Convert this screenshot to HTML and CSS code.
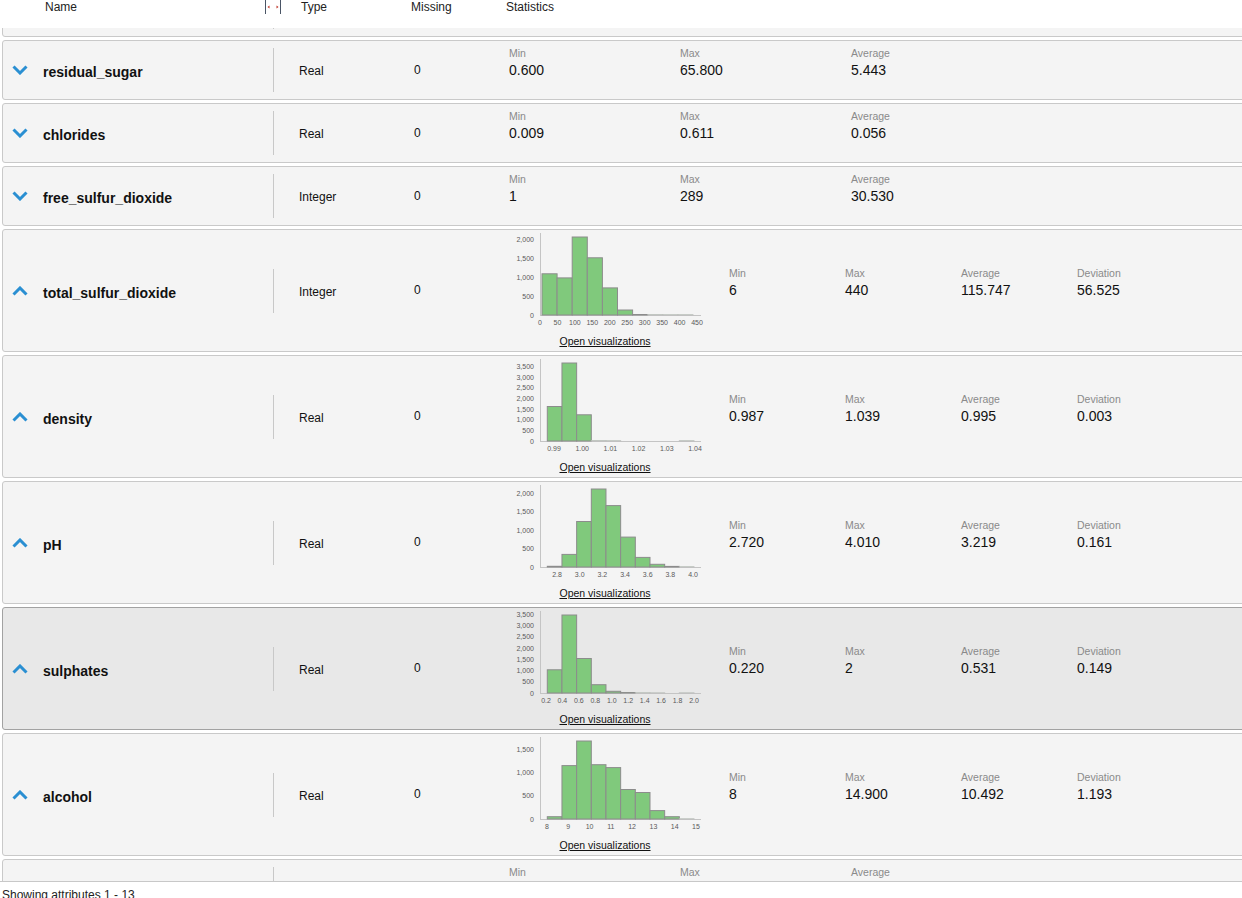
FILE: index.html
```html
<!DOCTYPE html>
<html>
<head>
<meta charset="utf-8">
<title>Attributes</title>
<link rel="stylesheet" href="styles.css">
</head>
<body>
<div class="header">
  <div class="h-name">Name</div>
  <div class="h-split">
    <svg width="17" height="15" viewBox="0 0 17 15">
      <line x1="0.5" y1="0" x2="0.5" y2="14" stroke="#4a5566" stroke-width="1"/>
      <line x1="15.5" y1="0" x2="15.5" y2="14" stroke="#4a5566" stroke-width="1"/>
      <path d="M4.5 5.5 L2.5 7 L4.5 8.5 Z" fill="#c0392b"/>
      <path d="M11.5 5.5 L13.5 7 L11.5 8.5 Z" fill="#c0392b"/>
    </svg>
  </div>
  <div class="h-type">Type</div>
  <div class="h-missing">Missing</div>
  <div class="h-stats">Statistics</div>
</div>

<div class="viewport">
  <div class="list">

    <div class="row">
      <div class="chev"></div>
      <div class="name"></div>
      <div class="sep"></div>
    </div>

    <div class="row">
      <div class="chev"><svg width="16" height="10" viewBox="0 0 16 10"><polyline class="chev-line" points="1.5,1.5 8,8 14.5,1.5"/></svg></div>
      <div class="name">residual_sugar</div>
      <div class="sep"></div>
      <div class="type">Real</div>
      <div class="missing">0</div>
      <div class="stats">
        <div class="stat"><div class="lbl">Min</div><div class="val">0.600</div></div>
        <div class="stat"><div class="lbl">Max</div><div class="val">65.800</div></div>
        <div class="stat"><div class="lbl">Average</div><div class="val">5.443</div></div>
      </div>
    </div>

    <div class="row">
      <div class="chev"><svg width="16" height="10" viewBox="0 0 16 10"><polyline class="chev-line" points="1.5,1.5 8,8 14.5,1.5"/></svg></div>
      <div class="name">chlorides</div>
      <div class="sep"></div>
      <div class="type">Real</div>
      <div class="missing">0</div>
      <div class="stats">
        <div class="stat"><div class="lbl">Min</div><div class="val">0.009</div></div>
        <div class="stat"><div class="lbl">Max</div><div class="val">0.611</div></div>
        <div class="stat"><div class="lbl">Average</div><div class="val">0.056</div></div>
      </div>
    </div>

    <div class="row">
      <div class="chev"><svg width="16" height="10" viewBox="0 0 16 10"><polyline class="chev-line" points="1.5,1.5 8,8 14.5,1.5"/></svg></div>
      <div class="name">free_sulfur_dioxide</div>
      <div class="sep"></div>
      <div class="type">Integer</div>
      <div class="missing">0</div>
      <div class="stats">
        <div class="stat"><div class="lbl">Min</div><div class="val">1</div></div>
        <div class="stat"><div class="lbl">Max</div><div class="val">289</div></div>
        <div class="stat"><div class="lbl">Average</div><div class="val">30.530</div></div>
      </div>
    </div>

    <div class="row expanded">
      <div class="chev"><svg width="16" height="10" viewBox="0 0 16 10"><polyline class="chev-line" points="1.5,8.5 8,2 14.5,8.5"/></svg></div>
      <div class="name">total_sulfur_dioxide</div>
      <div class="sep"></div>
      <div class="type">Integer</div>
      <div class="missing">0</div>
      <div class="chart">
        <svg width="200" height="104" viewBox="0 0 200 104">
          <line class="axis" x1="35.5" y1="3" x2="35.5" y2="86"/>
          <line class="axis" x1="35" y1="85.5" x2="196" y2="85.5"/>
          <text class="tick" x="29" y="87.5" text-anchor="end">0</text>
          <text class="tick" x="29" y="68.6" text-anchor="end">500</text>
          <text class="tick" x="29" y="49.7" text-anchor="end">1,000</text>
          <text class="tick" x="29" y="30.8" text-anchor="end">1,500</text>
          <text class="tick" x="29" y="11.8" text-anchor="end">2,000</text>
          <rect class="bar" x="37" y="43.8" width="15.1" height="41.2"/>
          <rect class="bar" x="52.1" y="47.9" width="15.1" height="37.1"/>
          <rect class="bar" x="67.2" y="7" width="15.1" height="78"/>
          <rect class="bar" x="82.3" y="27.8" width="15.1" height="57.2"/>
          <rect class="bar" x="97.4" y="57.9" width="15.1" height="27.1"/>
          <rect class="bar" x="112.5" y="80" width="15.1" height="5"/>
          <rect class="bar" x="127.6" y="84.5" width="15.1" height="0.5"/>
          <rect class="bar thin" x="142.7" y="84.7" width="15.1" height="0.3"/>
          <rect class="bar thin" x="157.8" y="84.8" width="15.1" height="0.2"/>
          <rect class="bar thin" x="172.9" y="84.8" width="15.1" height="0.2"/>
          <text class="tick" x="35" y="94.5" text-anchor="middle">0</text>
          <text class="tick" x="52.4" y="94.5" text-anchor="middle">50</text>
          <text class="tick" x="69.9" y="94.5" text-anchor="middle">100</text>
          <text class="tick" x="87.3" y="94.5" text-anchor="middle">150</text>
          <text class="tick" x="104.8" y="94.5" text-anchor="middle">200</text>
          <text class="tick" x="122.2" y="94.5" text-anchor="middle">250</text>
          <text class="tick" x="139.7" y="94.5" text-anchor="middle">300</text>
          <text class="tick" x="157.1" y="94.5" text-anchor="middle">350</text>
          <text class="tick" x="174.6" y="94.5" text-anchor="middle">400</text>
          <text class="tick" x="192" y="94.5" text-anchor="middle">450</text>
        </svg>
        <a class="viz" href="#">Open visualizations</a>
      </div>
      <div class="stats">
        <div class="stat"><div class="lbl">Min</div><div class="val">6</div></div>
        <div class="stat"><div class="lbl">Max</div><div class="val">440</div></div>
        <div class="stat"><div class="lbl">Average</div><div class="val">115.747</div></div>
        <div class="stat"><div class="lbl">Deviation</div><div class="val">56.525</div></div>
      </div>
    </div>

    <div class="row expanded">
      <div class="chev"><svg width="16" height="10" viewBox="0 0 16 10"><polyline class="chev-line" points="1.5,8.5 8,2 14.5,8.5"/></svg></div>
      <div class="name">density</div>
      <div class="sep"></div>
      <div class="type">Real</div>
      <div class="missing">0</div>
      <div class="chart">
        <svg width="200" height="104" viewBox="0 0 200 104">
          <line class="axis" x1="35.5" y1="3" x2="35.5" y2="86"/>
          <line class="axis" x1="35" y1="85.5" x2="196" y2="85.5"/>
          <text class="tick" x="29" y="87.5" text-anchor="end">0</text>
          <text class="tick" x="29" y="76.8" text-anchor="end">500</text>
          <text class="tick" x="29" y="66.2" text-anchor="end">1,000</text>
          <text class="tick" x="29" y="55.5" text-anchor="end">1,500</text>
          <text class="tick" x="29" y="44.8" text-anchor="end">2,000</text>
          <text class="tick" x="29" y="34.2" text-anchor="end">2,500</text>
          <text class="tick" x="29" y="23.5" text-anchor="end">3,000</text>
          <text class="tick" x="29" y="12.8" text-anchor="end">3,500</text>
          <rect class="bar" x="42.3" y="50.5" width="14.67" height="34.5"/>
          <rect class="bar" x="56.97" y="7" width="14.67" height="78"/>
          <rect class="bar" x="71.64" y="58.8" width="14.67" height="26.2"/>
          <rect class="bar thin" x="86.31" y="84.7" width="14.67" height="0.3"/>
          <rect class="bar thin" x="100.98" y="84.8" width="14.67" height="0.2"/>
          <rect class="bar thin" x="174.33" y="84.8" width="14.67" height="0.2"/>
          <text class="tick" x="49" y="94.5" text-anchor="middle">0.99</text>
          <text class="tick" x="77.2" y="94.5" text-anchor="middle">1.00</text>
          <text class="tick" x="105.4" y="94.5" text-anchor="middle">1.01</text>
          <text class="tick" x="133.6" y="94.5" text-anchor="middle">1.02</text>
          <text class="tick" x="161.8" y="94.5" text-anchor="middle">1.03</text>
          <text class="tick" x="190" y="94.5" text-anchor="middle">1.04</text>
        </svg>
        <a class="viz" href="#">Open visualizations</a>
      </div>
      <div class="stats">
        <div class="stat"><div class="lbl">Min</div><div class="val">0.987</div></div>
        <div class="stat"><div class="lbl">Max</div><div class="val">1.039</div></div>
        <div class="stat"><div class="lbl">Average</div><div class="val">0.995</div></div>
        <div class="stat"><div class="lbl">Deviation</div><div class="val">0.003</div></div>
      </div>
    </div>

    <div class="row expanded">
      <div class="chev"><svg width="16" height="10" viewBox="0 0 16 10"><polyline class="chev-line" points="1.5,8.5 8,2 14.5,8.5"/></svg></div>
      <div class="name">pH</div>
      <div class="sep"></div>
      <div class="type">Real</div>
      <div class="missing">0</div>
      <div class="chart">
        <svg width="200" height="104" viewBox="0 0 200 104">
          <line class="axis" x1="35.5" y1="3" x2="35.5" y2="86"/>
          <line class="axis" x1="35" y1="85.5" x2="196" y2="85.5"/>
          <text class="tick" x="29" y="87.5" text-anchor="end">0</text>
          <text class="tick" x="29" y="69.1" text-anchor="end">500</text>
          <text class="tick" x="29" y="50.7" text-anchor="end">1,000</text>
          <text class="tick" x="29" y="32.2" text-anchor="end">1,500</text>
          <text class="tick" x="29" y="13.8" text-anchor="end">2,000</text>
          <rect class="bar" x="42.3" y="84.3" width="14.67" height="0.7"/>
          <rect class="bar" x="56.97" y="72.4" width="14.67" height="12.6"/>
          <rect class="bar" x="71.64" y="39.5" width="14.67" height="45.5"/>
          <rect class="bar" x="86.31" y="7" width="14.67" height="78"/>
          <rect class="bar" x="100.98" y="23.6" width="14.67" height="61.4"/>
          <rect class="bar" x="115.65" y="55.1" width="14.67" height="29.9"/>
          <rect class="bar" x="130.32" y="75.4" width="14.67" height="9.6"/>
          <rect class="bar" x="144.99" y="82.3" width="14.67" height="2.7"/>
          <rect class="bar" x="159.66" y="84.4" width="14.67" height="0.6"/>
          <rect class="bar thin" x="174.33" y="84.8" width="14.67" height="0.2"/>
          <text class="tick" x="52" y="94.5" text-anchor="middle">2.8</text>
          <text class="tick" x="74.7" y="94.5" text-anchor="middle">3.0</text>
          <text class="tick" x="97.3" y="94.5" text-anchor="middle">3.2</text>
          <text class="tick" x="120" y="94.5" text-anchor="middle">3.4</text>
          <text class="tick" x="142.7" y="94.5" text-anchor="middle">3.6</text>
          <text class="tick" x="165.3" y="94.5" text-anchor="middle">3.8</text>
          <text class="tick" x="188" y="94.5" text-anchor="middle">4.0</text>
        </svg>
        <a class="viz" href="#">Open visualizations</a>
      </div>
      <div class="stats">
        <div class="stat"><div class="lbl">Min</div><div class="val">2.720</div></div>
        <div class="stat"><div class="lbl">Max</div><div class="val">4.010</div></div>
        <div class="stat"><div class="lbl">Average</div><div class="val">3.219</div></div>
        <div class="stat"><div class="lbl">Deviation</div><div class="val">0.161</div></div>
      </div>
    </div>

    <div class="row expanded selected">
      <div class="chev"><svg width="16" height="10" viewBox="0 0 16 10"><polyline class="chev-line" points="1.5,8.5 8,2 14.5,8.5"/></svg></div>
      <div class="name">sulphates</div>
      <div class="sep"></div>
      <div class="type">Real</div>
      <div class="missing">0</div>
      <div class="chart">
        <svg width="200" height="104" viewBox="0 0 200 104">
          <line class="axis" x1="35.5" y1="3" x2="35.5" y2="86"/>
          <line class="axis" x1="35" y1="85.5" x2="196" y2="85.5"/>
          <text class="tick" x="29" y="87.5" text-anchor="end">0</text>
          <text class="tick" x="29" y="76.3" text-anchor="end">500</text>
          <text class="tick" x="29" y="65" text-anchor="end">1,000</text>
          <text class="tick" x="29" y="53.8" text-anchor="end">1,500</text>
          <text class="tick" x="29" y="42.5" text-anchor="end">2,000</text>
          <text class="tick" x="29" y="31.3" text-anchor="end">2,500</text>
          <text class="tick" x="29" y="20.1" text-anchor="end">3,000</text>
          <text class="tick" x="29" y="8.8" text-anchor="end">3,500</text>
          <rect class="bar" x="42.3" y="61.8" width="14.67" height="23.2"/>
          <rect class="bar" x="56.97" y="7" width="14.67" height="78"/>
          <rect class="bar" x="71.64" y="50.5" width="14.67" height="34.5"/>
          <rect class="bar" x="86.31" y="76.7" width="14.67" height="8.3"/>
          <rect class="bar" x="100.98" y="83.3" width="14.67" height="1.7"/>
          <rect class="bar" x="115.65" y="84.55" width="14.67" height="0.45"/>
          <rect class="bar thin" x="130.32" y="84.8" width="14.67" height="0.2"/>
          <rect class="bar thin" x="144.99" y="84.9" width="14.67" height="0.1"/>
          <rect class="bar thin" x="174.33" y="84.9" width="14.67" height="0.1"/>
          <text class="tick" x="41" y="94.5" text-anchor="middle">0.2</text>
          <text class="tick" x="57.4" y="94.5" text-anchor="middle">0.4</text>
          <text class="tick" x="73.9" y="94.5" text-anchor="middle">0.6</text>
          <text class="tick" x="90.3" y="94.5" text-anchor="middle">0.8</text>
          <text class="tick" x="106.8" y="94.5" text-anchor="middle">1.0</text>
          <text class="tick" x="123.2" y="94.5" text-anchor="middle">1.2</text>
          <text class="tick" x="139.7" y="94.5" text-anchor="middle">1.4</text>
          <text class="tick" x="156.1" y="94.5" text-anchor="middle">1.6</text>
          <text class="tick" x="172.6" y="94.5" text-anchor="middle">1.8</text>
          <text class="tick" x="189" y="94.5" text-anchor="middle">2.0</text>
        </svg>
        <a class="viz" href="#">Open visualizations</a>
      </div>
      <div class="stats">
        <div class="stat"><div class="lbl">Min</div><div class="val">0.220</div></div>
        <div class="stat"><div class="lbl">Max</div><div class="val">2</div></div>
        <div class="stat"><div class="lbl">Average</div><div class="val">0.531</div></div>
        <div class="stat"><div class="lbl">Deviation</div><div class="val">0.149</div></div>
      </div>
    </div>

    <div class="row expanded">
      <div class="chev"><svg width="16" height="10" viewBox="0 0 16 10"><polyline class="chev-line" points="1.5,8.5 8,2 14.5,8.5"/></svg></div>
      <div class="name">alcohol</div>
      <div class="sep"></div>
      <div class="type">Real</div>
      <div class="missing">0</div>
      <div class="chart">
        <svg width="200" height="104" viewBox="0 0 200 104">
          <line class="axis" x1="35.5" y1="3" x2="35.5" y2="86"/>
          <line class="axis" x1="35" y1="85.5" x2="196" y2="85.5"/>
          <text class="tick" x="29" y="87.5" text-anchor="end">0</text>
          <text class="tick" x="29" y="64.3" text-anchor="end">500</text>
          <text class="tick" x="29" y="41.1" text-anchor="end">1,000</text>
          <text class="tick" x="29" y="17.9" text-anchor="end">1,500</text>
          <rect class="bar" x="42.3" y="82.7" width="14.67" height="2.3"/>
          <rect class="bar" x="56.97" y="31.6" width="14.67" height="53.4"/>
          <rect class="bar" x="71.64" y="7" width="14.67" height="78"/>
          <rect class="bar" x="86.31" y="30.7" width="14.67" height="54.3"/>
          <rect class="bar" x="100.98" y="33.6" width="14.67" height="51.4"/>
          <rect class="bar" x="115.65" y="55.5" width="14.67" height="29.5"/>
          <rect class="bar" x="130.32" y="58.5" width="14.67" height="26.5"/>
          <rect class="bar" x="144.99" y="76.6" width="14.67" height="8.4"/>
          <rect class="bar" x="159.66" y="82.7" width="14.67" height="2.3"/>
          <rect class="bar thin" x="174.33" y="84.85" width="14.67" height="0.15"/>
          <text class="tick" x="42" y="94.5" text-anchor="middle">8</text>
          <text class="tick" x="63.3" y="94.5" text-anchor="middle">9</text>
          <text class="tick" x="84.6" y="94.5" text-anchor="middle">10</text>
          <text class="tick" x="105.9" y="94.5" text-anchor="middle">11</text>
          <text class="tick" x="127.1" y="94.5" text-anchor="middle">12</text>
          <text class="tick" x="148.4" y="94.5" text-anchor="middle">13</text>
          <text class="tick" x="169.7" y="94.5" text-anchor="middle">14</text>
          <text class="tick" x="191" y="94.5" text-anchor="middle">15</text>
        </svg>
        <a class="viz" href="#">Open visualizations</a>
      </div>
      <div class="stats">
        <div class="stat"><div class="lbl">Min</div><div class="val">8</div></div>
        <div class="stat"><div class="lbl">Max</div><div class="val">14.900</div></div>
        <div class="stat"><div class="lbl">Average</div><div class="val">10.492</div></div>
        <div class="stat"><div class="lbl">Deviation</div><div class="val">1.193</div></div>
      </div>
    </div>

    <div class="row partial">
      <div class="chev"></div>
      <div class="name"></div>
      <div class="sep"></div>
      <div class="type"></div>
      <div class="missing"></div>
      <div class="stats">
        <div class="stat"><div class="lbl">Min</div></div>
        <div class="stat"><div class="lbl">Max</div></div>
        <div class="stat"><div class="lbl">Average</div></div>
      </div>
    </div>

  </div>
</div>

<div class="footer">Showing attributes 1 - 13</div>
</body>
</html>
```

FILE: styles.css
```css
* { box-sizing: border-box; }

html, body {
  margin: 0;
  padding: 0;
}

body {
  width: 1242px;
  height: 898px;
  overflow: hidden;
  background: #ffffff;
  font-family: "Liberation Sans", Arial, sans-serif;
  color: #1a1a1a;
}

/* header */
.header {
  height: 28px;
  display: flex;
  align-items: flex-start;
  font-size: 12px;
  line-height: 14px;
  color: #222;
}
.h-name { width: 265px; padding-left: 45px; }
.h-split { width: 17px; height: 15px; }
.h-split svg { display: block; }
.h-type { width: 129px; padding-left: 19px; }
.h-missing { width: 95px; }

/* scroll viewport */
.viewport {
  height: 854px;
  overflow: hidden;
  border-bottom: 1px solid #c8c8c8;
}

.list {
  margin-top: -51px;
  width: 1262px;
  display: flex;
  flex-direction: column;
  gap: 3px;
}

.row {
  margin-left: 2px;
  height: 60px;
  border: 1px solid #c9c9c9;
  border-radius: 3px;
  background: #f4f4f4;
  display: flex;
  align-items: center;
  flex-shrink: 0;
}
.row.expanded { height: 123px; }
.row.selected {
  background: #e8e8e8;
  border-color: #a2a2a2;
}

.chev {
  width: 40px;
  padding-left: 9px;
  display: flex;
  align-items: center;
}
.chev svg { display: block; }
.chev-line {
  fill: none;
  stroke: #2a8fd2;
  stroke-width: 3;
}

.name {
  width: 230px;
  padding-top: 4px;
  font-size: 14px;
  font-weight: bold;
  color: #111;
}

.sep {
  width: 1px;
  height: 44px;
  background: #c8c8c8;
}

.type {
  width: 140px;
  padding-left: 25px;
  padding-top: 2px;
  font-size: 12px;
  color: #111;
}

.missing {
  width: 91px;
  font-size: 12px;
  padding-bottom: 1px;
  color: #111;
}

/* stats */
.stats {
  display: flex;
  padding-left: 4px;
  padding-bottom: 15px;
}
.stat { width: 171px; }
.lbl {
  font-size: 10.5px;
  line-height: 13px;
  color: #8a8a8a;
}
.val {
  padding-top: 2px;
  font-size: 14px;
  line-height: 17px;
  color: #111;
}
.expanded .stats {
  padding-left: 24px;
  padding-bottom: 16px;
}
.expanded .stat { width: 116px; }
.expanded .val { padding-top: 2px; }

.partial .stats {
  padding-bottom: 34px;
}

/* chart */
.chart {
  width: 200px;
  height: 121px;
  align-self: flex-start;
  display: flex;
  flex-direction: column;
  align-items: center;
}
.chart svg { display: block; }
.axis {
  stroke: #c4c4c4;
  stroke-width: 1;
}
.bar {
  fill: #80c97c;
  stroke: #8c8c8c;
  stroke-width: 1;
}
.bar.thin {
  stroke: #bdbdbd;
}
.tick {
  font-family: "Liberation Sans", Arial, sans-serif;
  font-size: 7px;
  fill: #5a5a5a;
}
.viz {
  font-size: 10.5px;
  line-height: 14px;
  color: #111;
  text-decoration: underline;
}

.footer {
  padding: 6px 0 0 2px;
  font-size: 12px;
  line-height: 14px;
  color: #222;
}
```
